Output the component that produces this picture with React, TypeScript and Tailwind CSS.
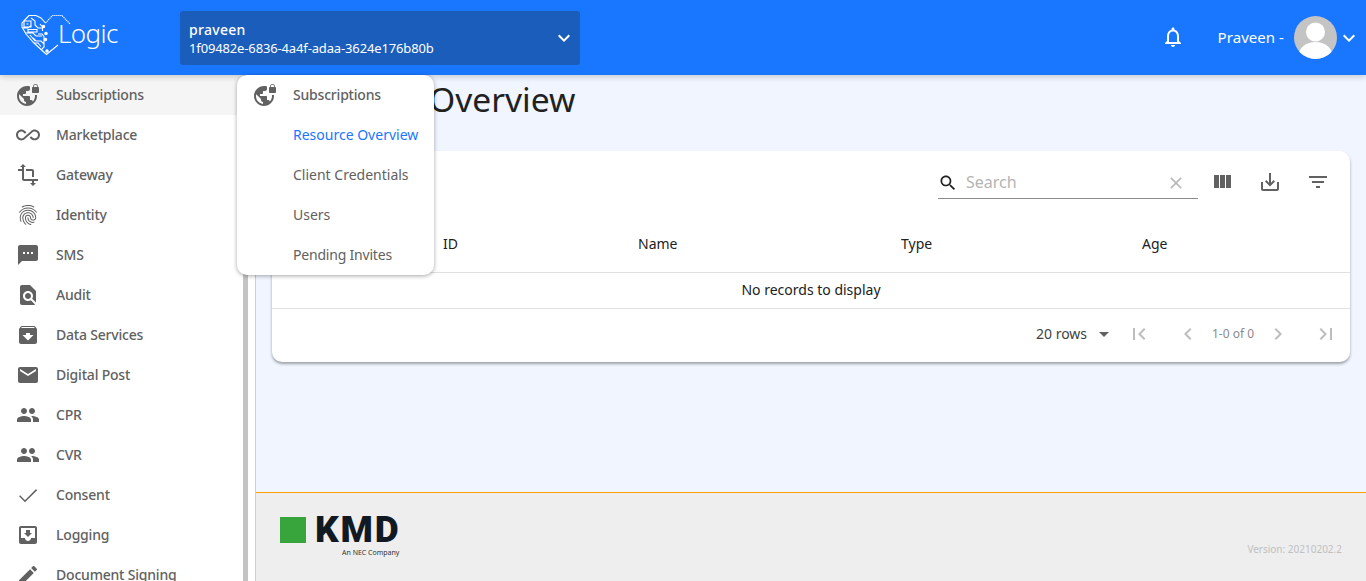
import React from "react";

const P = {
  vpn: "M22 4v-.5C22 2.12 20.88 1 19.5 1S17 2.12 17 3.5V4c-.55 0-1 .45-1 1v4c0 .55.45 1 1 1h5c.55 0 1-.45 1-1V5c0-.55-.45-1-1-1zm-.8 0h-3.4v-.5c0-.94.76-1.7 1.7-1.7s1.7.76 1.7 1.7V4zm-2.28 8c.04.33.08.66.08 1 0 2.08-.8 3.97-2.1 5.39-.26-.81-1-1.39-1.9-1.39h-1v-3c0-.55-.45-1-1-1H7v-2h2c.55 0 1-.45 1-1V8h2c1.1 0 2-.9 2-2V3.46c-.95-.3-1.95-.46-3-.46C5.48 3 1 7.48 1 13s4.48 10 10 10 10-4.48 10-10c0-.34-.02-.67-.05-1h-2.03zM10 20.93c-3.95-.49-7-3.85-7-7.93 0-.62.08-1.21.21-1.79L8 16v1c0 1.1.9 2 2 2v1.93z",
  inf: "M18.6 6.62c-1.44 0-2.8.56-3.77 1.53L12 10.66 10.48 12h.01L7.8 14.39c-.64.64-1.49.99-2.4.99-1.87 0-3.39-1.51-3.39-3.38S3.53 8.62 5.4 8.62c.91 0 1.76.35 2.44 1.03l1.13 1 1.51-1.34L9.22 8.2C8.2 7.18 6.84 6.62 5.4 6.62 2.42 6.62 0 9.04 0 12s2.42 5.38 5.4 5.38c1.44 0 2.8-.56 3.77-1.53l2.83-2.5.01.01L13.52 12h-.01l2.69-2.39c.64-.64 1.49-.99 2.4-.99 1.87 0 3.39 1.51 3.39 3.38s-1.52 3.38-3.39 3.38c-.9 0-1.76-.35-2.44-1.03l-1.14-1.01-1.51 1.34 1.27 1.12c1.02 1.01 2.37 1.57 3.82 1.57 2.98 0 5.4-2.41 5.4-5.38s-2.42-5.37-5.4-5.37z",
  transform: "M22 18v-2H8V4h2L7 1 4 4h2v2H2v2h4v8c0 1.1.9 2 2 2h8v2h-2l3 3 3-3h-2v-2h4zM10 8h6v6h2V8c0-1.1-.9-2-2-2h-6v2z",
  finger: "M17.81 4.47c-.08 0-.16-.02-.23-.06C15.66 3.42 14 3 12.01 3c-1.98 0-3.86.47-5.57 1.41-.24.13-.54.04-.68-.2-.13-.24-.04-.55.2-.68C7.82 2.52 9.86 2 12.01 2c2.13 0 3.99.47 6.03 1.52.25.13.34.43.21.67-.09.18-.26.28-.44.28zM3.5 9.72c-.1 0-.2-.03-.29-.09-.23-.16-.28-.47-.12-.7.99-1.4 2.25-2.5 3.75-3.27C9.98 4.04 14 4.03 17.15 5.65c1.5.77 2.76 1.86 3.75 3.25.16.22.11.54-.12.7-.23.16-.54.11-.7-.12-.9-1.26-2.04-2.25-3.39-2.94-2.87-1.47-6.54-1.47-9.4.01-1.36.7-2.5 1.7-3.4 2.96-.08.14-.23.21-.39.21zm6.25 12.07c-.13 0-.26-.05-.35-.15-.87-.87-1.34-1.43-2.01-2.64-.69-1.23-1.05-2.73-1.05-4.34 0-2.97 2.54-5.39 5.66-5.39s5.66 2.42 5.66 5.39c0 .28-.22.5-.5.5s-.5-.22-.5-.5c0-2.42-2.09-4.39-4.66-4.39-2.57 0-4.66 1.97-4.66 4.39 0 1.44.32 2.77.93 3.85.64 1.15 1.08 1.64 1.85 2.42.19.2.19.51 0 .71-.11.1-.24.15-.37.15zm7.17-1.85c-1.19 0-2.24-.3-3.1-.89-1.49-1.01-2.38-2.65-2.38-4.39 0-.28.22-.5.5-.5s.5.22.5.5c0 1.41.72 2.74 1.94 3.56.71.48 1.54.71 2.54.71.24 0 .64-.03 1.04-.1.27-.05.53.13.58.41.05.27-.13.53-.41.58-.57.11-1.07.12-1.21.12zM14.91 22c-.04 0-.09-.01-.13-.02-1.59-.44-2.63-1.03-3.72-2.1-1.4-1.39-2.17-3.24-2.17-5.22 0-1.62 1.38-2.94 3.08-2.94 1.7 0 3.08 1.32 3.08 2.94 0 1.07.93 1.94 2.08 1.94s2.08-.87 2.08-1.94c0-3.77-3.25-6.83-7.25-6.83-2.84 0-5.44 1.58-6.61 4.03-.39.81-.59 1.76-.59 2.8 0 .78.07 2.01.67 3.61.1.26-.03.55-.29.64-.26.1-.55-.04-.64-.29-.49-1.31-.73-2.61-.73-3.96 0-1.2.23-2.29.68-3.24 1.33-2.79 4.28-4.6 7.51-4.6 4.55 0 8.25 3.51 8.25 7.83 0 1.62-1.38 2.94-3.08 2.94s-3.08-1.32-3.08-2.94c0-1.07-.93-1.94-2.08-1.94s-2.08.87-2.08 1.94c0 1.71.66 3.31 1.87 4.51.95.94 1.86 1.46 3.27 1.85.27.07.42.35.35.61-.05.23-.26.38-.47.38z",
  sms: "M20 2H4c-1.1 0-1.99.9-1.99 2L2 22l4-4h14c1.1 0 2-.9 2-2V4c0-1.1-.9-2-2-2zM9 11H7V9h2v2zm4 0h-2V9h2v2zm4 0h-2V9h2v2z",
  find: "M20 19.59V8l-6-6H6c-1.1 0-1.99.9-1.99 2L4 20c0 1.1.89 2 1.99 2H18c.45 0 .85-.15 1.19-.4l-4.43-4.43c-.8.52-1.74.83-2.76.83-2.76 0-5-2.24-5-5s2.24-5 5-5 5 2.24 5 5c0 1.02-.31 1.96-.83 2.75L20 19.59zM9 13c0 1.66 1.34 3 3 3s3-1.34 3-3-1.34-3-3-3-3 1.34-3 3z",
  archive: "M20.54 5.23l-1.39-1.68C18.88 3.21 18.47 3 18 3H6c-.47 0-.88.21-1.16.55L3.46 5.23C3.17 5.57 3 6.02 3 6.5V19c0 1.1.9 2 2 2h14c1.1 0 2-.9 2-2V6.5c0-.48-.17-.93-.46-1.27zM12 17.5L6.5 12H10v-2h4v2h3.5L12 17.5zM5.12 5l.81-1h12l.94 1H5.12z",
  email: "M20 4H4c-1.1 0-1.99.9-1.99 2L2 18c0 1.1.9 2 2 2h16c1.1 0 2-.9 2-2V6c0-1.1-.9-2-2-2zm0 4l-8 5-8-5V6l8 5 8-5v2z",
  people: "M16 11c1.66 0 2.99-1.34 2.99-3S17.66 5 16 5c-1.66 0-3 1.34-3 3s1.34 3 3 3zm-8 0c1.66 0 2.99-1.34 2.99-3S9.66 5 8 5C6.34 5 5 6.34 5 8s1.34 3 3 3zm0 2c-2.33 0-7 1.17-7 3.5V19h14v-2.5c0-2.33-4.67-3.5-7-3.5zm8 0c-.29 0-.62.02-.97.05 1.16.84 1.97 1.97 1.97 3.45V19h6v-2.5c0-2.33-4.67-3.5-7-3.5z",
  inbox: "M19 3H4.99c-1.11 0-1.98.9-1.98 2L3 19c0 1.1.88 2 1.99 2H19c1.1 0 2-.9 2-2V5c0-1.1-.9-2-2-2zm0 12h-4c0 1.66-1.35 3-3 3s-3-1.34-3-3H4.99V5H19v10zm-3-5h-2V7h-4v3H8l4 4 4-4z",
  edit: "M3 17.25V21h3.75L17.81 9.94l-3.75-3.75L3 17.25zM20.71 7.04c.39-.39.39-1.02 0-1.41l-2.34-2.34c-.39-.39-1.02-.39-1.41 0l-1.83 1.83 3.75 3.75 1.83-1.83z",
  bell: "M12 22c1.1 0 2-.9 2-2h-4c0 1.1.9 2 2 2zm6-6v-5c0-3.07-1.63-5.64-4.5-6.32V4c0-.83-.67-1.5-1.5-1.5s-1.5.67-1.5 1.5v.68C7.64 5.36 6 7.92 6 11v5l-2 2v1h16v-1l-2-2zm-2 1H8v-6c0-2.48 1.51-4.5 4-4.5s4 2.02 4 4.5v6z",
  more: "M16.59 8.59L12 13.17 7.41 8.59 6 10l6 6 6-6z",
  search: "M15.5 14h-.79l-.28-.27C15.41 12.59 16 11.11 16 9.5 16 5.91 13.09 3 9.5 3S3 5.91 3 9.5 5.91 16 9.5 16c1.61 0 3.09-.59 4.23-1.57l.27.28v.79l5 4.99L20.49 19l-4.99-5zm-6 0C7.01 14 5 11.99 5 9.5S7.01 5 9.5 5 14 7.01 14 9.5 11.99 14 9.5 14z",
  clear: "M19 6.41L17.59 5 12 10.59 6.41 5 5 6.41 10.59 12 5 17.59 6.41 19 12 13.41 17.59 19 19 17.59 13.41 12z",
  columns: "M10 18h5V5h-5v13zm-6 0h5V5H4v13zM16 5v13h5V5h-5z",
  save: "M19 12v7H5v-7H3v7c0 1.1.9 2 2 2h14c1.1 0 2-.9 2-2v-7h-2zm-6 .67l2.59-2.58L17 11.5l-5 5-5-5 1.41-1.41L11 12.67V3h2z",
  filter: "M10 18h4v-2h-4v2zM3 6v2h18V6H3zm3 7h12v-2H6v2z",
  first: "M18.41 16.59L13.82 12l4.59-4.59L17 6l-6 6 6 6zM6 6h2v12H6z",
  last: "M5.59 7.41L10.18 12l-4.59 4.59L7 18l6-6-6-6zM16 6h2v12h-2z",
  left: "M15.41 7.41L14 6l-6 6 6 6 1.41-1.41L10.83 12z",
  right: "M10 6L8.59 7.41 13.17 12l-4.58 4.59L10 18l6-6z",
  drop: "M7 10l5 5 5-5z",
};

function Icon({ d, className }: { d: string; className: string }) {
  return (
    <svg viewBox="0 0 24 24" fill="currentColor" className={className}>
      <path d={d} />
    </svg>
  );
}

function ThinCheck() {
  return (
    <svg viewBox="0 0 24 24" fill="none" stroke="currentColor" strokeWidth="1.5" className="w-6 h-6">
      <path d="M3.6 12.8l5.4 5.4L20.6 6.6" />
    </svg>
  );
}

function HeartLogo() {
  return (
    <svg viewBox="0 0 52 46" fill="none" stroke="#fff" strokeWidth="1.1" className="w-[52px] h-[46px] shrink-0">
      <path d="M9 1.500h7l5 2.500 4.500 5" />
      <path d="M9 1.500L2 9v4l4 7 8 9 7 6.500 5.500 5 11.500-9.500" />
      <path d="M25.500 9l7-7.500h9.500l8 8.500" strokeDasharray="1.3 .7" />
      <path d="M4 7h7v6H4zM6.500 10h2M11 4l4 3v4l3 3h5M3 14h5l3-2.500M8 15.500h9v2.500H8zM5 19h8l3 3h6M13 24l3 3h5l3 3M18 20h4l2 2.500v5M20 10l2.500 3v4M14 29l4 0 3 3.500M24 27v6l-3 3M10 21l5 6" />
      <circle cx="23.500" cy="12.500" r="1.200" fill="#fff" />
      <circle cx="26" cy="19.500" r="1.200" fill="#fff" />
      <circle cx="25.500" cy="25.500" r="1.200" fill="#fff" />
      <circle cx="27" cy="37" r="1.200" fill="#fff" />
    </svg>
  );
}

const navItems: { label: string; d?: string; check?: boolean; active?: boolean }[] = [
  { label: "Subscriptions", d: P.vpn, active: true },
  { label: "Marketplace", d: P.inf },
  { label: "Gateway", d: P.transform },
  { label: "Identity", d: P.finger },
  { label: "SMS", d: P.sms },
  { label: "Audit", d: P.find },
  { label: "Data Services", d: P.archive },
  { label: "Digital Post", d: P.email },
  { label: "CPR", d: P.people },
  { label: "CVR", d: P.people },
  { label: "Consent", check: true },
  { label: "Logging", d: P.inbox },
  { label: "Document Signing", d: P.edit },
];

export default function App() {
  return (
    <div className="relative h-[581px] overflow-hidden flex flex-col bg-white font-['Noto_Sans',sans-serif]">
      <header className="relative z-10 h-[75px] shrink-0 bg-[#1976ff] flex items-center text-white shadow-[0_2px_6px_rgba(0,0,0,0.18)]">
        <div className="w-[180px] shrink-0 pl-[20px] flex items-center -mt-[1px]">
          <HeartLogo />
          <span className="-ml-[14px] -mt-[9px] text-[26px] tracking-[-0.6px] font-light leading-none">Logic</span>
        </div>
        <div className="w-[400px] h-[54px] mt-[1px] rounded-[3px] bg-[#1a5dbb] flex items-center justify-between pl-[9px] pr-[4px]">
          <div className="flex flex-col">
            <span className="text-[14px] leading-[20px] font-medium tracking-[0.3px]">praveen</span>
            <span className="text-[13px] leading-[17px] tracking-[-0.14px]">1f09482e-6836-4a4f-adaa-3624e176b80b</span>
          </div>
          <Icon d={P.more} className="w-6 h-6" />
        </div>
        <div className="flex-1" />
        <Icon d={P.bell} className="w-6 h-6 mr-[33px] -mt-[2px]" />
        <span className="text-[15px] tracking-[0.05px] mr-[10px]">Praveen -</span>
        <div className="w-[43px] h-[43px] rounded-full overflow-hidden bg-[#c4c4c4]">
          <svg viewBox="0 0 43 43" className="w-full h-full" fill="#fff">
            <circle cx="21.500" cy="16" r="9.500" />
            <ellipse cx="21.500" cy="40" rx="17" ry="14" />
          </svg>
        </div>
        <Icon d={P.more} className="w-6 h-6 mr-[5px] mt-[1px]" />
      </header>

      <div className="flex flex-1 min-h-0">
        <aside className="w-[256px] shrink-0 flex border-r border-[#cfcfcf] bg-white">
          <nav className="w-[243px] shrink-0 flex flex-col overflow-hidden">
            {navItems.map((item) => (
              <div
                key={item.label}
                className={`h-10 shrink-0 flex items-center pl-4 gap-4 text-[14px] font-medium tracking-[-0.2px] text-[#616161] ${item.active ? "w-[256px] bg-[#f5f5f5]" : ""}`}
              >
                {item.check ? <ThinCheck /> : <Icon d={item.d as string} className="w-6 h-6 shrink-0" />}
                <span className="pb-[2px] whitespace-nowrap">{item.label}</span>
              </div>
            ))}
          </nav>
          <div className="w-[5px] bg-[#c4c4c4]" />
        </aside>

        <main className="flex-1 min-w-0 flex flex-col bg-[#f0f5ff]">
          <div className="flex-1 px-4">
            <h1 className="h-[76px] text-[33.6px] leading-[48px] font-normal text-[#212121] pl-[3px]">Resource Overview</h1>
            <section className="h-[211px] rounded-[10px] bg-white shadow-[0_2px_3px_rgba(0,0,0,0.35)] flex flex-col">
              <div className="h-[63px] shrink-0 flex items-start pt-[19px] pl-[666px]">
                <div className="w-[260px] h-[29px] flex items-center border-b border-[#8a8a8a] pb-[2px]">
                  <Icon d={P.search} className="w-5 h-5 text-[#212121]" />
                  <span className="ml-[8px] flex-1 text-[16px] text-[#b4b4b4] pb-[2px]">Search</span>
                  <Icon d={P.clear} className="w-5 h-5 text-[#b8b8b8] mr-[12px]" />
                </div>
                <Icon d={P.columns} className="w-6 h-6 ml-[12px] text-[#616161]" />
                <Icon d={P.save} className="w-6 h-6 ml-[24px] text-[#616161]" />
                <Icon d={P.filter} className="w-6 h-6 ml-[24px] text-[#616161]" />
              </div>
              <div className="h-[59px] shrink-0 grid grid-cols-[171px_195px_263px_241px_1fr] items-center text-[14px] text-[#212121] border-b border-[#e0e0e0]">
                <span />
                <span>ID</span>
                <span>Name</span>
                <span>Type</span>
                <span>Age</span>
              </div>
              <div className="h-[36px] shrink-0 flex items-center justify-center text-[14px] text-[#212121] border-b border-[#e0e0e0] pb-[2px]">
                No records to display
              </div>
              <div className="flex-1 flex items-center text-[#bdbdbd] pl-[764px] pb-[3px]">
                <span className="text-[14px] text-[#424242] w-[52px] whitespace-nowrap pb-[2px]">20 rows</span>
                <Icon d={P.drop} className="w-6 h-6 ml-[4px] text-[#616161]" />
                <Icon d={P.first} className="w-6 h-6 ml-[11px]" />
                <Icon d={P.left} className="w-6 h-6 ml-[25px]" />
                <span className="w-[66px] text-center text-[12px] whitespace-nowrap text-[#8a8a8a]">1-0 of 0</span>
                <Icon d={P.right} className="w-6 h-6" />
                <Icon d={P.last} className="w-6 h-6 ml-[24px]" />
              </div>
            </section>
          </div>
          <footer className="h-[89px] shrink-0 bg-[#eeeeee] border-t border-[#ffa000] flex justify-between pl-[24px] pr-[24px]">
            <div className="flex flex-col mt-[24px]">
              <div className="flex items-center h-[26px]">
                <div className="w-[26px] h-[26px] bg-[#37a53b]" />
                <span className="ml-[9px] font-['Roboto',sans-serif] font-black text-[37px] tracking-[1.8px] leading-[26px] text-[#111a22]">KMD</span>
              </div>
              <span className="self-end mt-[5px] mr-[1px] text-[7px] leading-[10px] text-[#333]">An NEC Company</span>
            </div>
            <span className="self-end mb-[25px] text-[10px] leading-[14px] text-[#c0c0c0]">Version: 20210202.2</span>
          </footer>
        </main>
      </div>

      <div className="absolute z-20 left-[237px] top-[75px] w-[197px] h-[200px] bg-white rounded-[10px] shadow-[0_1px_4px_rgba(0,0,0,0.35)] text-[14px] text-[#616161]">
        <div className="h-10 flex items-center pl-4 gap-4 font-medium tracking-[-0.2px]">
          <Icon d={P.vpn} className="w-6 h-6" />
          <span className="pb-[2px]">Subscriptions</span>
        </div>
        <div className="h-10 flex items-center pl-[56px] pb-[2px] text-[#1976ff]">Resource Overview</div>
        <div className="h-10 flex items-center pl-[56px] pb-[2px]">Client Credentials</div>
        <div className="h-10 flex items-center pl-[56px] pb-[2px]">Users</div>
        <div className="h-10 flex items-center pl-[56px] pb-[2px] tracking-[-0.2px]">Pending Invites</div>
      </div>
    </div>
  );
}
